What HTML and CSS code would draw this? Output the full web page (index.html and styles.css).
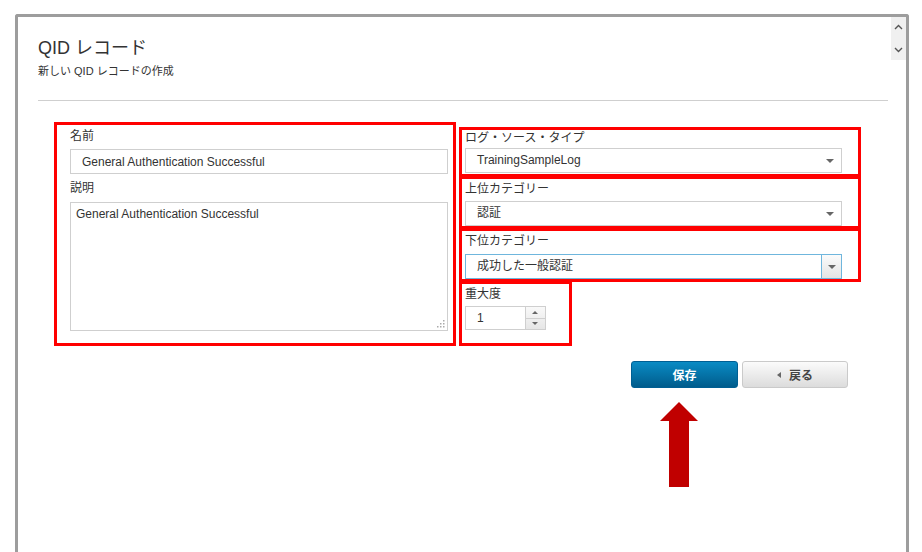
FILE: index.html
```html
<!DOCTYPE html>
<html lang="ja">

<head>
    <meta charset="UTF-8" />
    <title>QID レコード</title>
    <link rel="stylesheet" href="styles.css">
</head>

<body>

    <div class="frame">
        <!-- Scrollbar -->
        <div class="scroll-bar">
            <svg width="9" height="6" viewBox="0 0 9 6"><path d="M1 5 L4.5 1.5 L8 5" fill="none" stroke="#555" stroke-width="1.4" /></svg>
            <svg width="9" height="6" viewBox="0 0 9 6"><path d="M1 1 L4.5 4.5 L8 1" fill="none" stroke="#555" stroke-width="1.4" /></svg>
        </div>

        <!-- Header -->
        <div class="page-head">
            <h1>QID レコード</h1>
            <p>新しい QID レコードの作成</p>
        </div>
        <hr class="divider" />

        <!-- Form -->
        <div class="form-grid">
            <div class="mark-box left-box">
                <label>名前</label>
                <input class="text-input" type="text" value="General Authentication Successful" />
                <label class="gap-label">説明</label>
                <div class="textarea">General Authentication Successful
                    <svg class="grip" width="8" height="8" viewBox="0 0 8 8">
                        <rect x="6" y="0" width="1.5" height="1.5" fill="#aaa" />
                        <rect x="3" y="3" width="1.5" height="1.5" fill="#aaa" />
                        <rect x="6" y="3" width="1.5" height="1.5" fill="#aaa" />
                        <rect x="0" y="6" width="1.5" height="1.5" fill="#aaa" />
                        <rect x="3" y="6" width="1.5" height="1.5" fill="#aaa" />
                        <rect x="6" y="6" width="1.5" height="1.5" fill="#aaa" />
                    </svg>
                </div>
            </div>

            <div class="right-col">
                <div class="mark-box box-log">
                    <label>ログ・ソース・タイプ</label>
                    <div class="select">TrainingSampleLog<span class="caret"></span></div>
                </div>
                <div class="mark-box box-high">
                    <label>上位カテゴリー</label>
                    <div class="select">認証<span class="caret"></span></div>
                </div>
                <div class="mark-box box-low">
                    <label>下位カテゴリー</label>
                    <div class="select select-focus">成功した一般認証<span class="drop-btn"><span class="caret"></span></span></div>
                </div>
                <div class="mark-box box-sev">
                    <label>重大度</label>
                    <div class="spinner">
                        <span class="spin-value">1</span>
                        <span class="spin-btns">
                            <span class="spin-up"></span>
                            <span class="spin-down"></span>
                        </span>
                    </div>
                </div>
            </div>
        </div>

        <!-- Actions -->
        <div class="actions">
            <div class="save-col">
                <button class="btn btn-save">保存</button>
                <svg class="arrow" width="38" height="85" viewBox="0 0 38 85">
                    <polygon points="19,0 38,19 29,19 29,85 9,85 9,19 0,19" fill="#c00000" />
                </svg>
            </div>
            <button class="btn btn-back"><span class="back-tri"></span>戻る</button>
        </div>
    </div>

</body>

</html>
```

FILE: styles.css
```css
* {
    margin: 0;
    padding: 0;
    box-sizing: border-box;
}

body {
    background-color: #ffffff;
    font-family: 'Liberation Sans', 'Noto Sans CJK JP', sans-serif;
    color: #333;
    height: 552px;
    overflow: hidden;
}

/* Frame */
.frame {
    position: relative;
    margin: 14px 0 0 15px;
    width: 894px;
    height: 560px;
    border: 3px solid #9d9d9d;
    border-bottom: none;
    border-radius: 3px 3px 0 0;
    padding: 0 18px 0 20px;
}

.scroll-bar {
    position: absolute;
    top: 0;
    right: 0;
    width: 15px;
    height: 43px;
    background-color: #f0f0f0;
    display: flex;
    flex-direction: column;
    align-items: center;
    justify-content: space-between;
    padding: 7px 0 7px;
}

.scroll-bar svg {
    display: block;
}

/* Header */
.page-head {
    padding-top: 20px;
}

.page-head h1 {
    font-size: 18px;
    line-height: 22px;
    font-weight: normal;
    color: #333;
}

.page-head p {
    font-size: 11px;
    line-height: 16px;
    margin-top: 4px;
    color: #333;
}

.divider {
    border: none;
    border-top: 1px solid #cfcfcf;
    margin-top: 21px;
}

/* Form */
.form-grid {
    display: grid;
    grid-template-columns: 402px 402px;
    column-gap: 3px;
    align-items: start;
    margin: 21px 0 0 16px;
}

.mark-box {
    border: 3px solid #ff0000;
}

.mark-box label {
    display: block;
    font-size: 12px;
    line-height: 16px;
    color: #333;
}

.left-box {
    height: 224px;
    padding: 3px 5px 12px 13px;
}

.text-input {
    display: block;
    width: 100%;
    height: 25px;
    margin-top: 5px;
    border: 1px solid #cfcfcf;
    padding: 0 11px;
    font-family: 'Liberation Sans', 'Noto Sans CJK JP', sans-serif;
    font-size: 12px;
    color: #333;
}

.gap-label {
    margin-top: 6px;
}

.textarea {
    position: relative;
    margin-top: 6px;
    height: 129px;
    border: 1px solid #cfcfcf;
    padding: 4px 5px;
    font-size: 12px;
    line-height: 14px;
    color: #333;
}

.grip {
    position: absolute;
    right: 2px;
    bottom: 2px;
}

.right-col {
    margin-top: 5px;
    display: flex;
    flex-direction: column;
}

.right-col .mark-box {
    padding: 2px 16px 0 3px;
}

.box-log {
    padding-top: 0 !important;
    padding-bottom: 1px !important;
}

.box-high,
.box-low,
.box-sev {
    margin-top: -1px;
}

.select {
    position: relative;
    height: 25px;
    margin-top: 4px;
    border: 1px solid #cfcfcf;
    padding-left: 11px;
    font-size: 12px;
    line-height: 23px;
    color: #333;
    background-color: #fff;
}

.box-log .select {
    margin-top: 2px;
}

.box-low .select {
    margin-top: 5px;
}

.caret {
    position: absolute;
    right: 7px;
    top: 10px;
    width: 0;
    height: 0;
    border-left: 4px solid transparent;
    border-right: 4px solid transparent;
    border-top: 4px solid #666;
}

.select-focus {
    border-color: #6fb6dd;
}

.drop-btn {
    position: absolute;
    top: 0;
    right: 0;
    width: 20px;
    height: 23px;
    border-left: 1px solid #6fb6dd;
    background: linear-gradient(#fbfbfb, #e4e4e4);
}

.drop-btn .caret {
    right: 5px;
}

.box-sev {
    width: 113px;
    height: 65px;
}

.spinner {
    display: flex;
    width: 81px;
    height: 24px;
    margin-top: 4px;
    border: 1px solid #cfcfcf;
}

.spin-value {
    flex: 1;
    padding-left: 11px;
    font-size: 12px;
    line-height: 22px;
    color: #333;
}

.spin-btns {
    width: 20px;
    display: flex;
    flex-direction: column;
    border-left: 1px solid #cfcfcf;
    background: linear-gradient(#f9f9f9, #e6e6e6);
}

.spin-up,
.spin-down {
    flex: 1;
    position: relative;
}

.spin-up {
    border-bottom: 1px solid #cfcfcf;
}

.spin-up::after,
.spin-down::after {
    content: "";
    position: absolute;
    left: 6px;
    top: 4px;
    border-left: 3.5px solid transparent;
    border-right: 3.5px solid transparent;
}

.spin-up::after {
    border-bottom: 3.5px solid #666;
}

.spin-down::after {
    top: 3px;
    border-top: 3.5px solid #666;
}

/* Actions */
.actions {
    display: flex;
    justify-content: flex-end;
    align-items: flex-start;
    gap: 4px;
    width: 810px;
    margin-top: 15px;
}

.save-col {
    display: flex;
    flex-direction: column;
    align-items: center;
}

.btn {
    height: 27px;
    border-radius: 3px;
    font-family: 'Liberation Sans', 'Noto Sans CJK JP', sans-serif;
    font-size: 12px;
    font-weight: bold;
    cursor: pointer;
}

.btn-save {
    width: 107px;
    border: 1px solid #005f93;
    background: linear-gradient(#0a8bc4, #005c8c);
    color: #ffffff;
}

.btn-back {
    width: 106px;
    border: 1px solid #cacaca;
    background: linear-gradient(#fbfbfb, #dcdcdc);
    color: #444;
    display: flex;
    align-items: center;
    justify-content: center;
    gap: 8px;
}

.back-tri {
    width: 0;
    height: 0;
    border-top: 3.5px solid transparent;
    border-bottom: 3.5px solid transparent;
    border-right: 4px solid #666;
}

.arrow {
    display: block;
    margin-top: 14px;
    margin-right: 11px;
}
```
